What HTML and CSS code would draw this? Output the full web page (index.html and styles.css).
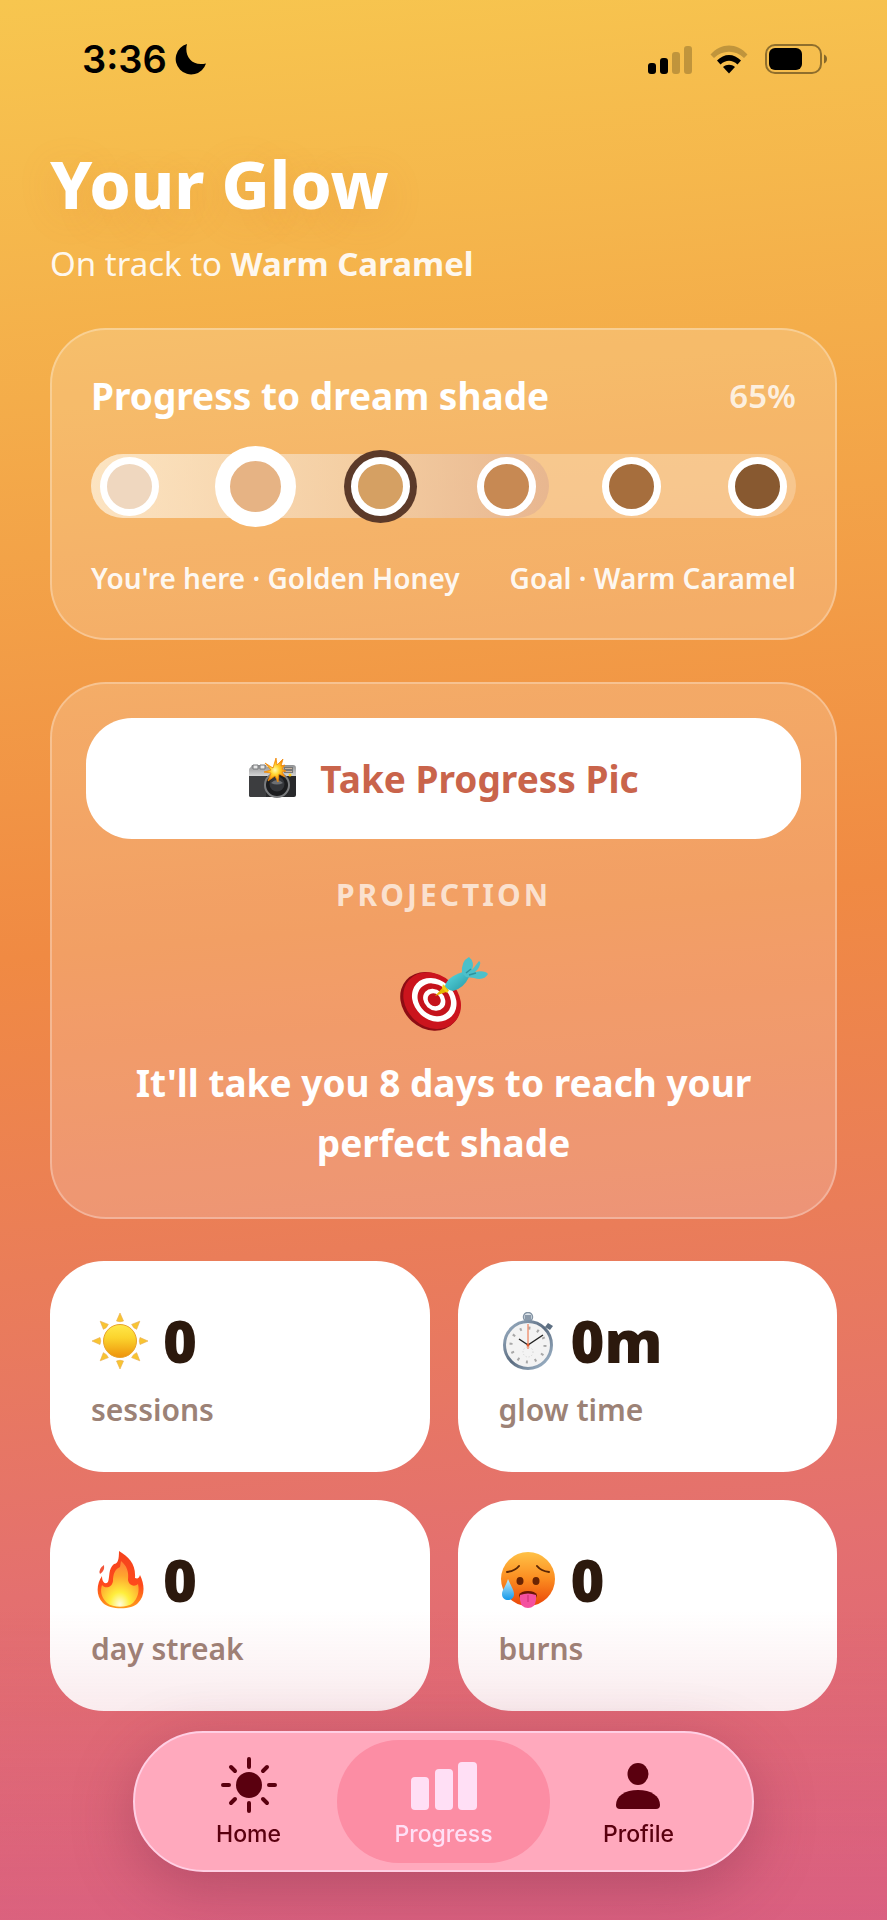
FILE: index.html
```html
<!DOCTYPE html>
<html lang="en">
<head>
  <meta charset="UTF-8">
  <meta name="viewport" content="width=device-width, initial-scale=1">
  <title>Your Glow</title>
  <link rel="stylesheet" href="styles.css">
</head>
<body>

<div class="status-bar">
  <div class="status-time">
    <span>3:36</span>
    <svg width="32" height="32" viewBox="0 0 32 32"><path d="M12 1C9 12 16 24 31 20.500A15.500 15.500 0 1 1 12 1z"/></svg>
  </div>
  <div class="status-icons">
    <svg width="45" height="29" viewBox="0 0 45 29">
      <rect x="0" y="18" width="8" height="11" rx="3"/>
      <rect x="12" y="13" width="8" height="16" rx="3"/>
      <rect class="dim" x="24" y="7" width="8" height="22" rx="3"/>
      <rect class="dim" x="36" y="1" width="8" height="28" rx="3"/>
    </svg>
    <svg width="38" height="29" viewBox="0 0 38 29">
      <path class="dim" d="M0.500 9.500C11-2.500 27-2.500 37.500 9.500L34 13C25.500 4.500 12.500 4.500 4 13z"/>
      <path d="M7 15.500C14 8 24 8 31 15.500L27.500 19.500C22 14.500 16 14.500 10.500 19.500z"/>
      <path d="M13 22C16.500 19 21.500 19 25 22L19 28.500z"/>
    </svg>
    <svg width="63" height="30" viewBox="0 0 63 30">
      <rect class="battery-shell" x="1" y="1" width="55" height="28" rx="9"/>
      <rect x="4" y="4" width="33" height="22" rx="6"/>
      <path class="battery-tip" d="M59 10.500C63 12 63 18 59 19.500z"/>
    </svg>
  </div>
</div>

<main class="page">
  <header class="intro">
    <h1>Your Glow</h1>
    <p>On track to <strong>Warm Caramel</strong></p>
  </header>

  <section class="glass shade-card">
    <div class="row">
      <h2>Progress to dream shade</h2>
      <span class="percent">65%</span>
    </div>
    <div class="track" role="progressbar" aria-label="Progress to dream shade" aria-valuenow="65" aria-valuemin="0" aria-valuemax="100">
      <div class="track-fill" style="width: 65%"></div>
      <span class="dot shade-1"></span>
      <span class="dot shade-2 current"></span>
      <span class="dot shade-3 goal"></span>
      <span class="dot shade-4"></span>
      <span class="dot shade-5"></span>
      <span class="dot shade-6"></span>
    </div>
    <div class="row legend">
      <span>You're here · Golden Honey</span>
      <span>Goal · Warm Caramel</span>
    </div>
  </section>

  <section class="glass projection-card">
    <button class="photo-button" type="button">
      <!-- camera with flash -->
      <svg width="50" height="44" viewBox="0 0 50 44" aria-hidden="true">
        <defs>
          <linearGradient id="camTop" x1="0" y1="0" x2="0" y2="1"><stop offset="0" stop-color="#8f9092"/><stop offset="1" stop-color="#dcdcdc"/></linearGradient>
          <radialGradient id="flash"><stop offset="0" stop-color="#fffbb0"/><stop offset=".4" stop-color="#ffd52e"/><stop offset="1" stop-color="#f57c00"/></radialGradient>
        </defs>
        <path d="M1 20V13q0-2 2-3l1-2h14l1 2h11V8h15q3 0 3 3v9z" fill="url(#camTop)"/>
        <path d="M5 8h5v4H5zm7 0h5v4h-5z" fill="#e8e8e8" stroke="#77797b"/>
        <path d="M1 19h47v19q0 2-2 2H3q-2 0-2-2z" fill="#28292b"/>
        <path d="M1 19h17v21H3q-2 0-2-2z" fill="#3c3d3f"/>
        <path d="M36 10h9v6h-9z" fill="#777"/><path d="M37 11h7v1h-7zm0 3h7v1h-7z" fill="#c9b3a0"/>
        <circle cx="42" cy="18" r="1.500" fill="#ffcc19"/>
        <circle cx="29" cy="28" r="12" fill="#1b1c1e" stroke="#7a7c7e" stroke-width="2"/>
        <circle cx="29" cy="27" r="7.500" fill="#34363a"/>
        <path d="M23 26q6-6 12 0-6 3-12 0z" fill="#6d7074"/>
        <path d="M28 1l1 7 6-6-2 7 4-1-3 4 4 2-4 1 3 5-6-3-1 8-3-6-7 5 3-8-7-1 7-2-6-7 8 5z" fill="url(#flash)" stroke="#f18a0a" stroke-width=".8"/>
      </svg>
      <span>Take Progress Pic</span>
    </button>
    <p class="eyebrow">PROJECTION</p>
    <!-- dart in target -->
    <svg class="target" width="88" height="74" viewBox="0 0 88 74" aria-hidden="true">
      <defs>
        <linearGradient id="dart" x1="0" y1="0" x2="1" y2="1"><stop offset="0" stop-color="#5cdbe2"/><stop offset="1" stop-color="#2697a4"/></linearGradient>
      </defs>
      <g transform="rotate(42 30 43)">
        <ellipse cx="31" cy="44" rx="32" ry="27" fill="#8d0d14"/>
        <ellipse cx="32" cy="42" rx="31" ry="26" fill="#cb141d"/>
        <ellipse cx="33" cy="40" rx="24" ry="20" fill="#fff"/>
        <ellipse cx="33" cy="40" rx="18" ry="15" fill="#c5131c"/>
        <ellipse cx="33" cy="40" rx="12" ry="10" fill="#fff"/>
        <ellipse cx="33" cy="40" rx="7" ry="6" fill="#c5131c"/>
      </g>
      <path d="M35 39l10-11 4 6z" fill="#e6b800"/>
      <path d="M43 27l5 7-1 2-5-5z" fill="#f5cf15"/>
      <path d="M45 29Q47 20 63 15L69 20Q64 31 53 34 47 33 45 29z" fill="url(#dart)"/>
      <path d="M62 16Q61 4 69 0 75 5 72 13L79 4Q82 5 78 12L75 15Q85 13 88 17 84 24 74 21L66 20z" fill="#4cc0ca"/>
      <path d="M66 16l5-4M69 18l7-2" stroke="#2f929c" stroke-width="1.500"/>
    </svg>
    <p class="projection-text">It'll take you 8 days to reach your perfect shade</p>
  </section>

  <section class="stats">
    <article class="stat">
      <div class="stat-value">
        <svg width="58" height="58" viewBox="0 0 58 58" aria-hidden="true">
          <defs>
            <linearGradient id="sun" x1="0" y1="0" x2="0" y2="1"><stop offset="0" stop-color="#ffe84a"/><stop offset=".4" stop-color="#fbd42d"/><stop offset="1" stop-color="#ee930c"/></linearGradient>
          </defs>
          <circle cx="29" cy="29" r="16.500" fill="url(#sun)" stroke="#e8a32c"/>
          <g fill="#f8c431" stroke="#e9ac4e" stroke-width=".6">
            <path id="ray" d="M29 1l3.500 8q-3.500 1.500-7 0z"/>
            <use href="#ray" transform="rotate(45 29 29)"/>
            <use href="#ray" transform="rotate(90 29 29)"/>
            <use href="#ray" transform="rotate(135 29 29)"/>
            <use href="#ray" transform="rotate(180 29 29)"/>
            <use href="#ray" transform="rotate(225 29 29)"/>
            <use href="#ray" transform="rotate(270 29 29)"/>
            <use href="#ray" transform="rotate(315 29 29)"/>
          </g>
        </svg>
        <span>0</span>
      </div>
      <div class="stat-label">sessions</div>
    </article>

    <article class="stat">
      <div class="stat-value">
        <svg width="58" height="58" viewBox="0 0 58 58" aria-hidden="true">
          <defs>
            <linearGradient id="rim" x1="0" y1="0" x2="1" y2="1"><stop offset="0" stop-color="#9fb4c8"/><stop offset=".5" stop-color="#5b6c80"/><stop offset="1" stop-color="#a8bed2"/></linearGradient>
          </defs>
          <circle cx="29" cy="5" r="4.500" fill="#dfe6ec" stroke="#8494a4" stroke-width="1.500"/>
          <path d="M26 3h6v7h-6z" fill="#8b9aaa"/>
          <path d="M46 15l3-4 5 3-3 4z" fill="#5d6f82"/>
          <circle cx="29" cy="33" r="23.500" fill="#f3f3f3" stroke="url(#rim)" stroke-width="3"/>
          <circle cx="29" cy="33" r="17" fill="none" stroke="#a8a8a8" stroke-width="3" stroke-dasharray="2 6.900"/>
          <circle cx="29" cy="40" r="5" fill="none" stroke="#cfcfcf" stroke-dasharray="1 2"/>
          <path d="M29 33l15-10M29 33l-9-6" stroke="#222" stroke-width="1.500"/>
          <path d="M29 12v25" stroke="#ee6a3c"/>
          <circle cx="29" cy="33" r="1.500" fill="#e0592c"/>
        </svg>
        <span>0m</span>
      </div>
      <div class="stat-label">glow time</div>
    </article>

    <article class="stat">
      <div class="stat-value">
        <svg width="58" height="58" viewBox="0 0 58 58" aria-hidden="true">
          <defs>
            <linearGradient id="fireOuter" x1="0" y1="0" x2="0" y2="1"><stop offset="0" stop-color="#f4431d"/><stop offset=".6" stop-color="#ff4a1c"/><stop offset="1" stop-color="#ff9c1a"/></linearGradient>
            <radialGradient id="fireInner" cx=".5" cy=".95" r=".9"><stop offset="0" stop-color="#fffde0"/><stop offset=".3" stop-color="#ffee3c"/><stop offset=".7" stop-color="#ffa52e"/><stop offset="1" stop-color="#ff8438"/></radialGradient>
          </defs>
          <path d="M28 0C38 6 45 13 44 27 47 28 48 27 49 24 54 34 54 45 47 52 41 59 19 59 12 52 4 44 6 32 11 25 11 31 14 34 17 31 19 26 17 18 23 13 27 13 28 8 28 0z" fill="url(#fireOuter)"/>
          <path d="M30 10C36 15 38 21 37 29 38 35 44 36 47 33 49 41 46 48 42 52 36 57 22 57 16 52 10 46 9 40 11 34 14 38 21 37 22 30 22 23 24 18 29 16z" fill="url(#fireInner)"/>
          <path d="M13 14Q14 20 9 23 7 18 13 14z" fill="#f2553a"/>
        </svg>
        <span>0</span>
      </div>
      <div class="stat-label">day streak</div>
    </article>

    <article class="stat">
      <div class="stat-value">
        <svg width="58" height="58" viewBox="0 0 58 58" aria-hidden="true">
          <defs>
            <linearGradient id="face" x1="0" y1="0" x2="0" y2="1"><stop offset="0" stop-color="#ffc247"/><stop offset=".5" stop-color="#fb8c20"/><stop offset="1" stop-color="#ea4508"/></linearGradient>
            <linearGradient id="drop" x1="0" y1="0" x2="0" y2="1"><stop offset="0" stop-color="#c4ecfb"/><stop offset="1" stop-color="#1299ea"/></linearGradient>
          </defs>
          <circle cx="29" cy="28" r="27" fill="url(#face)"/>
          <path d="M8 21q8-1 12-6M50 21q-8-1-12-6" fill="none" stroke="#5b2605" stroke-width="2" stroke-linecap="round"/>
          <ellipse cx="21" cy="30" rx="3.500" ry="4" fill="#6a2403"/>
          <ellipse cx="37" cy="30" rx="3.500" ry="4" fill="#6a2403"/>
          <path d="M20 44q2-4 9-4t9 4l-1 3H21z" fill="#6a1506"/>
          <path d="M21 44q8-3 16 0v5q-1 8-8 8t-8-8z" fill="#f4509f"/>
          <path d="M29 44v7" stroke="#c92d75"/>
          <path d="M9 28C12 35 15 39 15 43 15 51 3 51 3 43 3 39 7 35 9 28z" fill="url(#drop)"/>
        </svg>
        <span>0</span>
      </div>
      <div class="stat-label">burns</div>
    </article>
  </section>
</main>

<div class="bottom-fade"></div>

<nav class="tab-bar">
  <a class="tab" href="#home">
    <svg width="58" height="58" viewBox="0 0 58 58" aria-hidden="true">
      <circle cx="29" cy="29" r="13"/>
      <path class="rays" d="M29 3v8M29 47v8M3 29h6M49 29h6M11 11l4 4M43 43l4 4M11 47l4-4M43 15l4-4"/>
    </svg>
    <span>Home</span>
  </a>
  <a class="tab active" href="#progress" aria-current="page">
    <svg width="66" height="58" viewBox="0 0 66 58" aria-hidden="true">
      <rect x="0" y="21" width="18" height="33" rx="4"/>
      <rect x="24" y="13" width="18" height="41" rx="4"/>
      <rect x="47" y="6" width="19" height="48" rx="4"/>
    </svg>
    <span>Progress</span>
  </a>
  <a class="tab" href="#profile">
    <svg width="58" height="58" viewBox="0 0 58 58" aria-hidden="true">
      <ellipse cx="29" cy="18" rx="10.500" ry="11"/>
      <path d="M7 49C7 40 16 34 29 34S51 40 51 49Q51 53 47 53H11Q7 53 7 49z"/>
    </svg>
    <span>Profile</span>
  </a>
</nav>

</body>
</html>
```
FILE: styles.css
```css
* { box-sizing: border-box; }

body {
  margin: 0;
  min-height: 100vh;
  background: linear-gradient(175deg, #f7c64f 0%, #f08a43 48%, #e4706f 80%, #db6080 100%);
  font-family: "Noto Sans", "Open Sans", sans-serif;
  color: #fff;
}

h1, h2, p { margin: 0; }

/* Status bar */
.status-bar {
  display: flex;
  justify-content: space-between;
  align-items: center;
  height: 118px;
  padding: 0 59px 0 82px;
  color: #000;
}

.status-time {
  display: flex;
  align-items: center;
  gap: 8px;
  font: 600 38px/46px Inter, sans-serif;
}

.status-icons {
  display: flex;
  align-items: center;
  gap: 17px;
}

.dim { opacity: 0.22; }

.battery-shell {
  fill: none;
  stroke: #000;
  stroke-width: 2;
  opacity: 0.42;
}

.battery-tip { opacity: 0.45; }

/* Page */
.page {
  display: flex;
  flex-direction: column;
  gap: 42px;
  padding: 24px 50px 207px;
}

.intro h1 {
  font-size: 66px;
  font-weight: 800;
  line-height: 82px;
  text-shadow: 0 8px 40px rgba(210, 110, 50, 0.2);
}

.intro p {
  margin-top: 18px;
  font-size: 33px;
  line-height: 44px;
  color: rgba(255, 255, 255, 0.92);
}

.glass {
  border: 2px solid rgba(255, 255, 255, 0.28);
  border-radius: 56px;
  background: rgba(255, 255, 255, 0.18);
}

.row {
  display: flex;
  justify-content: space-between;
  align-items: center;
}

.shade-card { padding: 40px 39px; }

.shade-card h2 {
  font-size: 37px;
  font-weight: 700;
  line-height: 52px;
}

.percent {
  font-size: 33px;
  font-weight: 600;
  line-height: 44px;
  color: rgba(255, 255, 255, 0.8);
}

.track {
  position: relative;
  display: flex;
  justify-content: space-between;
  align-items: center;
  height: 64px;
  margin: 32px 0 40px;
  padding: 0 9px;
  border-radius: 32px;
  background: rgba(255, 255, 255, 0.25);
}

.track-fill {
  position: absolute;
  left: 0;
  top: 0;
  height: 100%;
  border-radius: 32px;
  background: linear-gradient(90deg, rgba(255, 246, 228, 0.6), rgba(240, 210, 180, 0.5) 60%, rgba(217, 166, 145, 0.5));
}

.dot {
  position: relative;
  width: 59px;
  height: 59px;
  border: 7px solid #fff;
  border-radius: 50%;
}

.dot.current {
  width: 67px;
  height: 67px;
  margin: 0 -4px;
  border-width: 8px;
  box-shadow: 0 0 0 7px #fff;
}

.dot.goal { box-shadow: 0 0 0 7px #5c3a29; }

.shade-1 { background: #efd7bf; }
.shade-2 { background: #e6b384; }
.shade-3 { background: #d5a063; }
.shade-4 { background: #c78953; }
.shade-5 { background: #a66e3d; }
.shade-6 { background: #885930; }

.legend {
  font-size: 28px;
  font-weight: 600;
  line-height: 40px;
  color: rgba(255, 255, 255, 0.92);
}

.projection-card {
  display: flex;
  flex-direction: column;
  align-items: center;
  padding: 34px 34px 44px;
  text-align: center;
}

.photo-button {
  display: flex;
  justify-content: center;
  align-items: center;
  gap: 22px;
  width: 100%;
  height: 121px;
  border: 0;
  border-radius: 46px;
  background: #fff;
  color: #c9644b;
  font: 700 37px/52px "Noto Sans", "Open Sans", sans-serif;
  cursor: pointer;
}

.eyebrow {
  margin: 36px 0 42px;
  font-size: 30px;
  font-weight: 700;
  line-height: 40px;
  letter-spacing: 3px;
  color: rgba(255, 255, 255, 0.7);
}

.projection-text {
  max-width: 660px;
  margin-top: 22px;
  font-size: 37px;
  font-weight: 700;
  line-height: 60px;
}

/* Stats */
.stats {
  display: grid;
  grid-template-columns: 1fr 1fr;
  gap: 28px;
}

.stat {
  padding: 40px 41px;
  border-radius: 54px;
  background: #fff;
}

.stat-value {
  display: flex;
  align-items: center;
  gap: 14px;
  font-size: 58px;
  font-weight: 900;
  line-height: 80px;
  color: #2c190d;
}

.stat-label {
  margin-top: 7px;
  font-size: 30px;
  font-weight: 600;
  line-height: 44px;
  color: #9c8276;
}

/* Tab bar */
.bottom-fade {
  position: fixed;
  inset: auto 0 0;
  height: 310px;
  background: linear-gradient(rgba(215, 95, 115, 0), rgba(215, 95, 115, 0.12) 100px, rgba(215, 95, 130, 0.3));
}

.tab-bar {
  position: fixed;
  left: 15%;
  right: 15%;
  bottom: 48px;
  display: grid;
  grid-template-columns: 1fr 1fr 1fr;
  padding: 7px 16px;
  border: 2px solid #ffcfe4;
  border-radius: 71px;
  background: #ffa9bd;
  box-shadow: 0 16px 60px rgba(110, 40, 70, 0.35);
}

.tab {
  display: flex;
  flex-direction: column;
  align-items: center;
  gap: 6px;
  padding: 16px 0 14px;
  border-radius: 62px;
  font: 500 23px/29px Inter, sans-serif;
  color: #5a000f;
  text-decoration: none;
}

.tab svg { fill: currentColor; }

.tab.active {
  margin: 0 -9px;
  background: #fc8da4;
  color: #ffdff5;
}

.rays {
  fill: none;
  stroke: currentColor;
  stroke-width: 4;
  stroke-linecap: round;
}
```
